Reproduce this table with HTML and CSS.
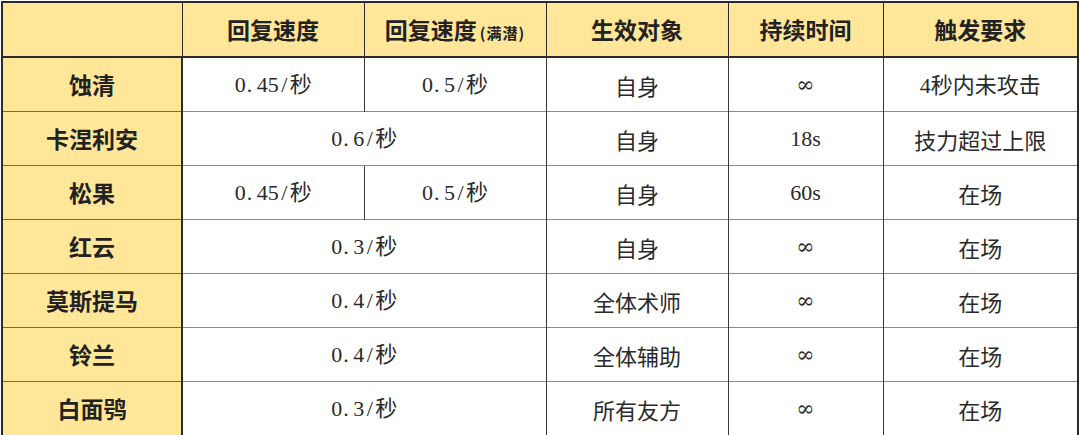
FILE: index.html
```html
<!DOCTYPE html>
<html lang="zh-CN">
<head>
<meta charset="utf-8">
<title>回复速度</title>
<link rel="stylesheet" href="styles.css">
</head>
<body>
<table class="sheet">
  <colgroup>
    <col class="c-name">
    <col class="c-rate">
    <col class="c-rate">
    <col class="c-target">
    <col class="c-dur">
    <col class="c-req">
  </colgroup>
  <thead>
    <tr>
      <th></th>
      <th>回复速度</th>
      <th>回复速度<span class="small">(满潜)</span></th>
      <th>生效对象</th>
      <th>持续时间</th>
      <th>触发要求</th>
    </tr>
  </thead>
  <tbody>
    <tr class="first">
      <th>蚀清</th>
      <td class="num">0<span class="dot">.</span>45<span class="sl">/</span>秒</td>
      <td class="num">0<span class="dot">.</span>5<span class="sl">/</span>秒</td>
      <td>自身</td>
      <td class="inf">∞</td>
      <td><span class="num">4</span>秒内未攻击</td>
    </tr>
    <tr>
      <th>卡涅利安</th>
      <td class="num" colspan="2">0<span class="dot">.</span>6<span class="sl">/</span>秒</td>
      <td>自身</td>
      <td class="num">18s</td>
      <td>技力超过上限</td>
    </tr>
    <tr>
      <th>松果</th>
      <td class="num">0<span class="dot">.</span>45<span class="sl">/</span>秒</td>
      <td class="num">0<span class="dot">.</span>5<span class="sl">/</span>秒</td>
      <td>自身</td>
      <td class="num">60s</td>
      <td>在场</td>
    </tr>
    <tr>
      <th>红云</th>
      <td class="num" colspan="2">0<span class="dot">.</span>3<span class="sl">/</span>秒</td>
      <td>自身</td>
      <td class="inf">∞</td>
      <td>在场</td>
    </tr>
    <tr>
      <th>莫斯提马</th>
      <td class="num" colspan="2">0<span class="dot">.</span>4<span class="sl">/</span>秒</td>
      <td>全体术师</td>
      <td class="inf">∞</td>
      <td>在场</td>
    </tr>
    <tr>
      <th>铃兰</th>
      <td class="num" colspan="2">0<span class="dot">.</span>4<span class="sl">/</span>秒</td>
      <td>全体辅助</td>
      <td class="inf">∞</td>
      <td>在场</td>
    </tr>
    <tr>
      <th>白面鸮</th>
      <td class="num" colspan="2">0<span class="dot">.</span>3<span class="sl">/</span>秒</td>
      <td>所有友方</td>
      <td class="inf">∞</td>
      <td>在场</td>
    </tr>
  </tbody>
</table>
</body>
</html>
```

FILE: styles.css
```css
html, body {
  margin: 0;
  padding: 0;
  background: #ffffff;
}

body {
  font-family: "Noto Sans CJK SC", "Noto Sans", sans-serif;
  color: #222222;
}

.sheet {
  border-collapse: collapse;
  table-layout: fixed;
  width: 1078px;
  margin: 1px 0 0 1px;
  border: 2px solid #2b2b2b;
}

.c-name { width: 180px; }
.c-rate { width: 182px; }
.c-target { width: 182px; }
.c-dur { width: 155px; }
.c-req { width: 195px; }

.sheet th,
.sheet td {
  height: 53px;
  padding: 0;
  text-align: center;
  vertical-align: middle;
  font-size: 22px;
  line-height: 1;
  white-space: nowrap;
}

.sheet thead th {
  height: 53px;
  background: #ffe699;
  font-weight: 700;
  font-size: 23px;
  border-left: 1.5px solid #2b2b2b;
  border-bottom: 2px solid #2b2b2b;
}

.sheet tbody th {
  background: #ffe699;
  font-weight: 700;
  font-size: 23px;
  border-right: 2px solid #2b2b2b;
  border-top: 1.5px solid #7a6a3e;
}

.sheet tbody td {
  font-weight: 400;
  color: #2a2a2a;
  border-left: 1.5px solid #3a3a3a;
  border-top: 1.5px solid #8a8a8a;
}

.sheet tbody tr.first td {
  border-top: 2px solid #2b2b2b;
}

.small {
  font-size: 15px;
  font-weight: 700;
  margin-left: 3px;
  letter-spacing: 1px;
}

.num,
.sheet td.num {
  font-family: "Liberation Serif", "Noto Sans CJK SC", serif;
  font-size: 22px;
}

.dot {
  display: inline-block;
  width: 11px;
  text-align: left;
  padding-left: 1px;
  box-sizing: border-box;
}

.sl {
  display: inline-block;
  width: 11px;
  text-align: center;
}

.inf {
  font-family: "DejaVu Serif", "Liberation Serif", serif;
  font-size: 24px;
}
```
